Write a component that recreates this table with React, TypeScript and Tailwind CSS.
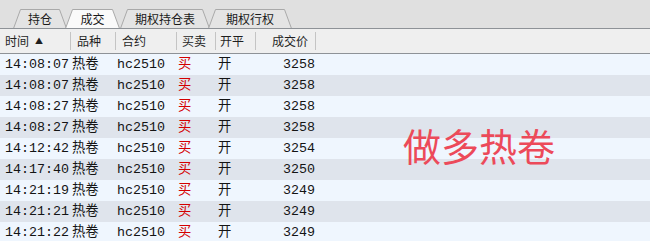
import React from "react";

const rows = [
  ["14:08:07", "3258"],
  ["14:08:07", "3258"],
  ["14:08:27", "3258"],
  ["14:08:27", "3258"],
  ["14:12:42", "3254"],
  ["14:17:40", "3250"],
  ["14:21:19", "3249"],
  ["14:21:21", "3249"],
  ["14:21:22", "3249"],
];

function Tab({
  label,
  width,
  active,
  className,
}: {
  label: string;
  width: number;
  active?: boolean;
  className: string;
}) {
  return (
    <div className={`relative h-[19px] flex items-center justify-center ${className} ${active ? "z-20" : "z-10"}`}>
      <svg className="absolute inset-0" width={width} height={19} viewBox={`0 0 ${width} 19`}>
        <polygon
          points={`0.5,19.5 7.5,0.5 ${width - 7.5},0.5 ${width - 0.5},19.5`}
          fill={active ? "#fafafa" : "#e4e4e4"}
          stroke="#a9a9a9"
          strokeWidth={1}
        />
      </svg>
      <span className="relative text-[12px] leading-none text-[#1a1a1a] pt-[1px]">{label}</span>
    </div>
  );
}

export default function App() {
  return (
    <div className="relative w-[650px] h-[241px] overflow-hidden bg-[#eff6fe] font-['Noto_Sans_CJK_SC','Noto_Sans',sans-serif]">
      {/* tab bar */}
      <div className="h-[29px] bg-[#e0e0e0] border-b border-[#8e9297] flex items-end pl-[13px]">
        <Tab label="持仓" width={54} className="w-[54px]" />
        <Tab label="成交" width={55} active className="w-[55px] -ml-[2px]" />
        <Tab label="期权持仓表" width={90} className="w-[90px]" />
        <Tab label="期权行权" width={84} className="w-[84px] -ml-[2px]" />
      </div>

      {/* header */}
      <div className="h-[25px] bg-[#efefef] border-b border-[#8e9297] flex text-[12px] text-[#1f1f1f] leading-none">
        <div className="w-[71px] my-[3px] border-r border-[#c4c4c4] flex items-center pl-[5px] gap-[6px]">
          <span>时间</span>
          <span className="text-[8px]">▲</span>
        </div>
        <div className="w-[45px] my-[3px] border-r border-[#c4c4c4] flex items-center pl-[6px]">品种</div>
        <div className="w-[61px] my-[3px] border-r border-[#c4c4c4] flex items-center pl-[6px]">合约</div>
        <div className="w-[39px] my-[3px] border-r border-[#c4c4c4] flex items-center pl-[5px]">买卖</div>
        <div className="w-[40px] my-[3px] border-r border-[#c4c4c4] flex items-center pl-[4px]">开平</div>
        <div className="w-[60px] my-[3px] border-r border-[#c4c4c4] flex items-center justify-end pr-[7px]">成交价</div>
      </div>

      {/* rows */}
      <div className="flex flex-col font-['Liberation_Mono','Noto_Sans_CJK_SC',monospace] text-[13.33px] leading-none text-[#141414]">
        {rows.map(([t, p], i) => (
          <div
            key={i}
            className={`h-[21px] shrink-0 flex items-center ${i % 2 === 0 ? "bg-[#eff6fe]" : "bg-[#dfe4ec]"}`}
          >
            <div className="w-[71px] pl-[5px] whitespace-nowrap">{t}</div>
            <div className="w-[45px] pl-[1px]">热卷</div>
            <div className="w-[61px] pl-[1px]">hc2510</div>
            <div className="w-[39px] pl-[1px] text-[#d40000]">买</div>
            <div className="w-[40px] pl-[2px]">开</div>
            <div className="w-[60px] text-right pr-[1px]">{p}</div>
          </div>
        ))}
      </div>

      {/* overlay label */}
      <div className="absolute left-[403px] top-[126px] text-[38px] leading-none text-[#ec4a5a] whitespace-nowrap">
        做多热卷
      </div>
    </div>
  );
}
